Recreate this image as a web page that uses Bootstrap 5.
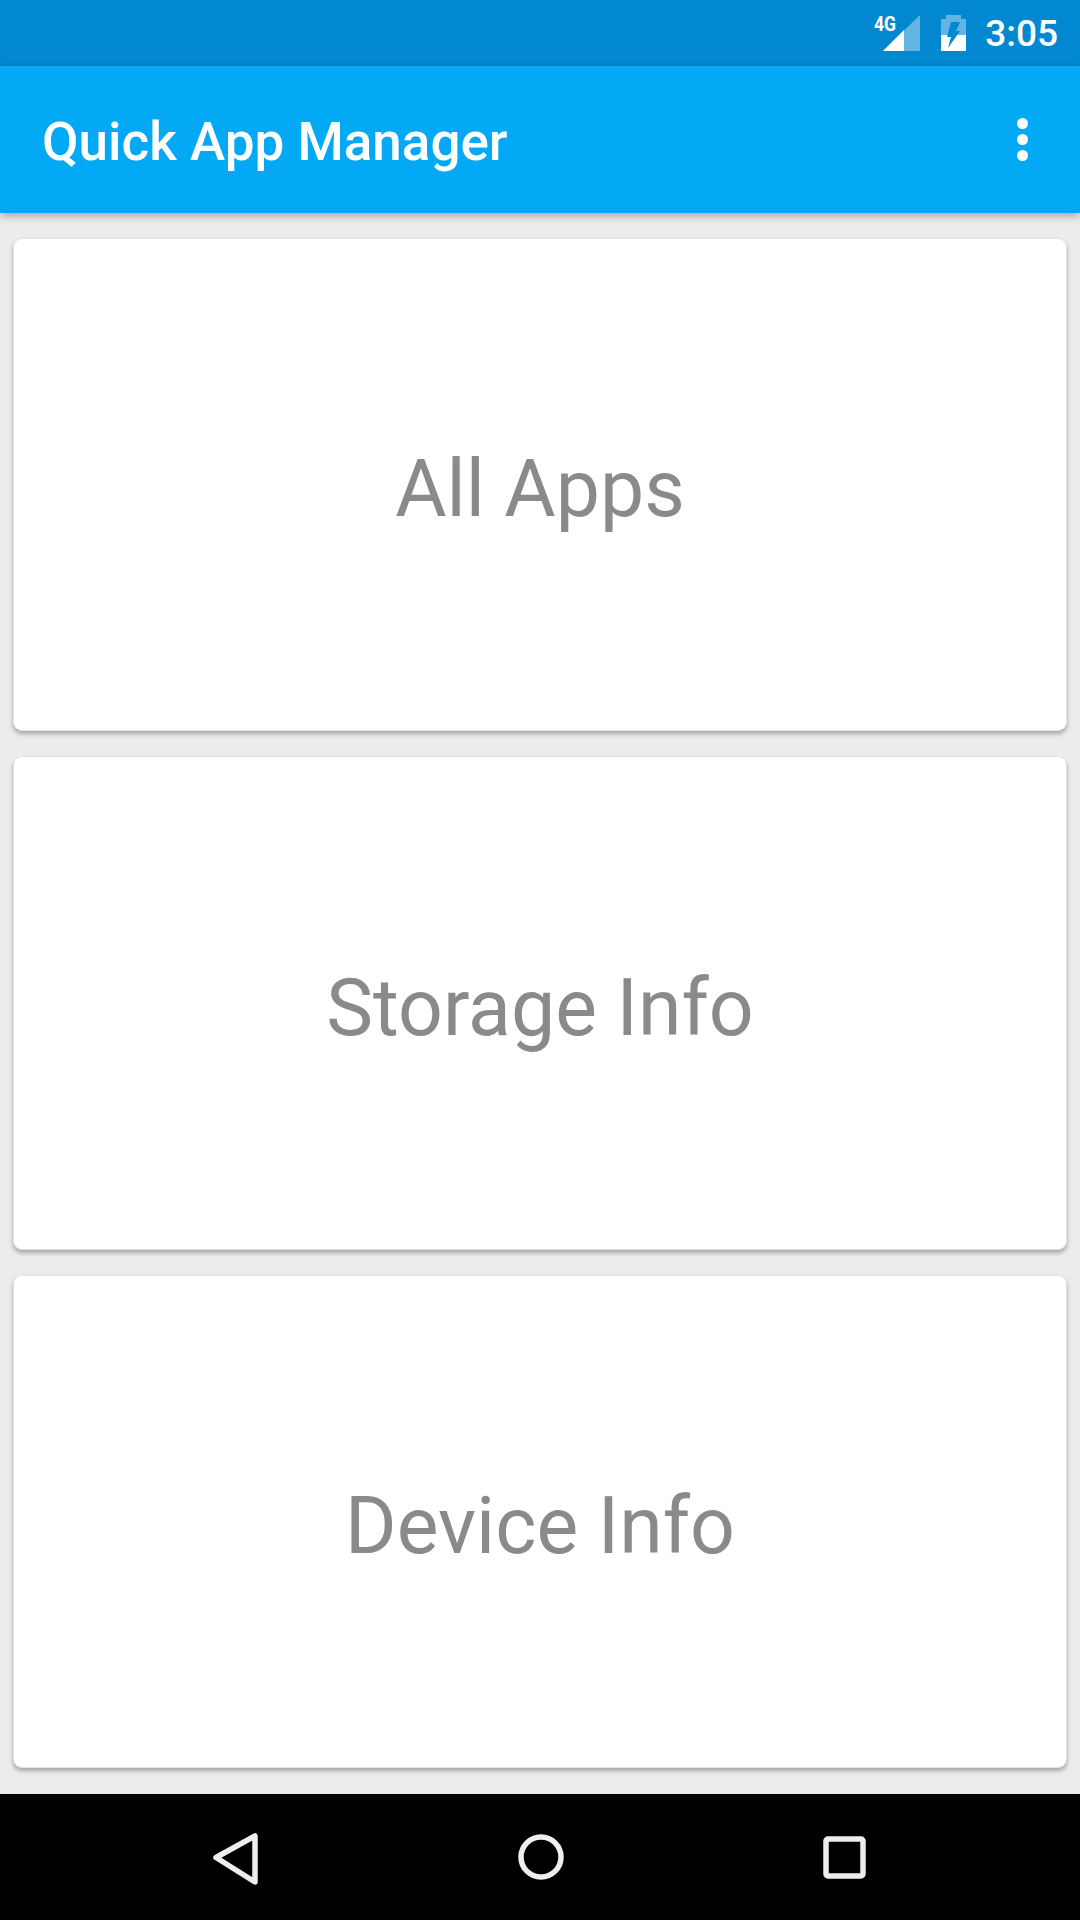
<!DOCTYPE html>
<html lang="en">
<head>
    <meta charset="UTF-8">
    <meta name="viewport" content="width=device-width, initial-scale=1.0">
    <title>Quick App Manager</title>
    <link href="https://cdn.jsdelivr.net/npm/bootstrap@5.3.0/dist/css/bootstrap.min.css" rel="stylesheet">
    <style>
        html, body {
            height: 100%;
        }
        body {
            margin: 0;
            background-color: #ececec;
            font-family: Roboto, "Liberation Sans", sans-serif;
        }
        .screen {
            height: 1920px;
        }
        .status-bar {
            height: 66px;
            background-color: #0288d1;
            padding-right: 22px;
        }
        .status-time {
            font-size: 37px;
            line-height: 1;
            font-weight: 500;
            margin-left: 19px;
        }
        .battery-icon {
            margin-left: 21px;
        }
        .signal-text {
            font-family: Roboto, "Liberation Sans", sans-serif;
            font-size: 20px;
            font-weight: 700;
            fill: #fff;
        }
        .app-bar {
            height: 147px;
            background-color: #03a9f4;
            padding: 0 52px 0 42px;
            box-shadow: 0 3px 8px rgba(0, 0, 0, 0.3);
            z-index: 2;
        }
        .app-title {
            font-size: 53px;
            font-weight: 500;
            line-height: 1;
            margin: 6px 0 0;
        }
        .menu-dots span {
            display: block;
            width: 11px;
            height: 11px;
            border-radius: 50%;
            background-color: #fff;
        }
        .menu-dots {
            gap: 5px;
        }
        .content-area {
            padding: 25px 13px 26px;
            gap: 25px;
        }
        .tile {
            border: 1px solid #e4e4e4;
            border-radius: 9px;
            box-shadow: 0 3px 4px rgba(0, 0, 0, 0.3);
        }
        .tile-label {
            font-size: 78.75px;
            line-height: 1;
            color: #8a8a8a;
            padding-top: 10px;
        }
        .nav-bar {
            height: 126px;
            background-color: #000;
        }
    </style>
</head>
<body>
    <div class="screen d-flex flex-column">
        <!-- Status bar -->
        <div class="status-bar d-flex align-items-center justify-content-end text-white">
            <svg width="46" height="40" viewBox="0 0 46 40">
                <polygon points="46,2 46,38 9,38" fill="#fff" fill-opacity="0.38"/>
                <polygon points="30,17 30,38 9,38" fill="#fff"/>
                <text class="signal-text" x="0" y="18" textLength="22" lengthAdjust="spacingAndGlyphs">4G</text>
            </svg>
            <svg class="battery-icon" width="25" height="38" viewBox="0 0 25 38">
                <path d="M5 1h15v4h5v32H0V5h5z" fill="#fff" fill-opacity="0.38"/>
                <path d="M0 21h25v16H0z" fill="#fff"/>
                <path d="M10 8h9l-4 9h4L7 34l3-11H6z" fill="#0288d1"/>
            </svg>
            <span class="status-time">3:05</span>
        </div>

        <!-- App bar -->
        <header class="app-bar d-flex align-items-center justify-content-between text-white">
            <h1 class="app-title">Quick App Manager</h1>
            <div class="menu-dots d-flex flex-column"><span></span><span></span><span></span></div>
        </header>

        <!-- Main buttons -->
        <main class="content-area flex-grow-1 d-flex flex-column">
            <div class="card tile flex-fill bg-white d-flex align-items-center justify-content-center"><span class="tile-label">All Apps</span></div>
            <div class="card tile flex-fill bg-white d-flex align-items-center justify-content-center"><span class="tile-label">Storage Info</span></div>
            <div class="card tile flex-fill bg-white d-flex align-items-center justify-content-center"><span class="tile-label">Device Info</span></div>
        </main>

        <!-- Navigation bar -->
        <nav class="nav-bar d-flex align-items-center justify-content-between">
            <svg width="1080" height="126" viewBox="0 0 1080 126">
                <path d="M255 42v46L216 63.500z" fill="none" stroke="#eeeeee" stroke-width="5.500" stroke-linejoin="round"/>
                <circle cx="541" cy="63" r="20" fill="none" stroke="#eeeeee" stroke-width="5.500"/>
                <rect x="826" y="45" width="37" height="37" rx="2" fill="none" stroke="#eeeeee" stroke-width="5.500"/>
            </svg>
        </nav>
    </div>
    <script src="https://cdn.jsdelivr.net/npm/bootstrap@5.3.0/dist/js/bootstrap.bundle.min.js"></script>
</body>
</html>
